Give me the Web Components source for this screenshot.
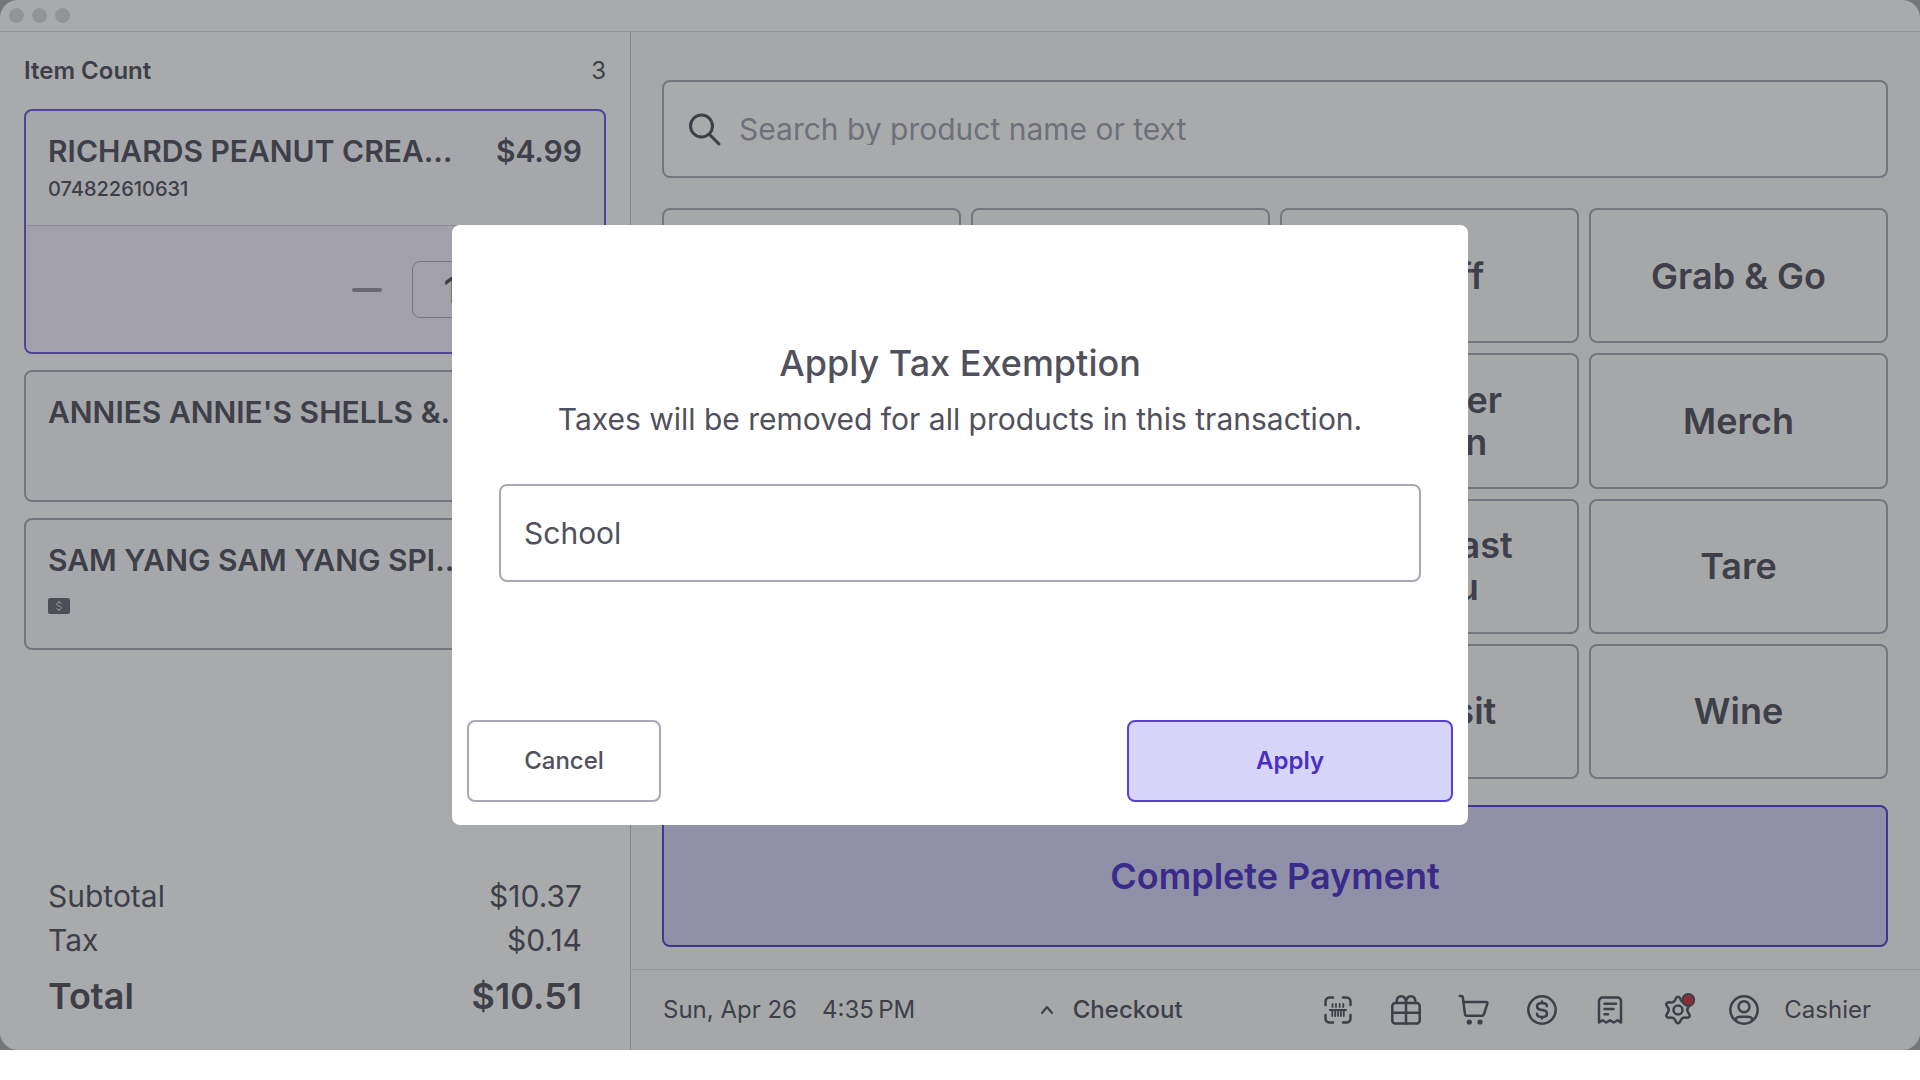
<!DOCTYPE html>
<html lang="en">
<head>
<meta charset="utf-8">
<title>Checkout</title>
<style>
    body {
        --ink: #50515c;
        --line: #a9a9b5;
        --hairline: #dcdce0;
        --accent: #5a3fd6;
        --accent-text: #4a2fc6;
        --accent-soft: #d8d5fb;
        margin: 0;
        min-height: 100vh;
        display: flex;
        background: #fff;
        color: var(--ink);
        font-family: Inter, "Liberation Sans", sans-serif;
        font-size: 24px;
        line-height: 32px;
    }
</style>
</head>
<body>
<pos-window>
    <pos-cart count="3">
        <cart-item name="RICHARDS PEANUT CREA&hellip;" price="$4.99" code="074822610631" quantity="1" selected></cart-item>
        <cart-item name="ANNIES ANNIE'S SHELLS &amp;&hellip;"></cart-item>
        <cart-item name="SAM YANG SAM YANG SPI&hellip;" cash></cart-item>
    </pos-cart>
    <pos-catalog>
        <quick-tile></quick-tile>
        <quick-tile></quick-tile>
        <quick-tile>$5 Off</quick-tile>
        <quick-tile>Grab &amp; Go</quick-tile>
        <quick-tile></quick-tile>
        <quick-tile></quick-tile>
        <quick-tile>Member Return</quick-tile>
        <quick-tile>Merch</quick-tile>
        <quick-tile></quick-tile>
        <quick-tile></quick-tile>
        <quick-tile>Breakfast Menu</quick-tile>
        <quick-tile>Tare</quick-tile>
        <quick-tile></quick-tile>
        <quick-tile></quick-tile>
        <quick-tile>Deposit</quick-tile>
        <quick-tile>Wine</quick-tile>
    </pos-catalog>
    <status-bar slot="status"></status-bar>
    <tax-dialog slot="dialog" value="School">
        <span slot="title">Apply Tax Exemption</span>
        <span slot="message">Taxes will be removed for all products in this transaction.</span>
    </tax-dialog>
</pos-window>

<script>
// Shared rules, each shadow root gets its own copy
const BASE = `
    * { box-sizing: border-box; }
    button, input { font: inherit; color: inherit; margin: 0; }
    button { background: none; border: 0; padding: 0; cursor: pointer; }
    svg { display: block; fill: none; stroke: currentColor; stroke-linecap: round; stroke-linejoin: round; overflow: visible; }
`;

class PosElement extends HTMLElement {
    constructor() {
        super();
        this.attachShadow({ mode: 'open' });
    }

    connectedCallback() {
        this.shadowRoot.innerHTML = `<style>${BASE}</style>${this.render()}`;
    }
}

// App window: title bar, cart on the left, catalog and status bar on the right
class PosWindow extends PosElement {
    render() {
        return `
            <style>
                :host {
                    position: relative;
                    flex: 1;
                    display: flex;
                    margin-bottom: 30px;
                    background: #aaabad;
                }
                .frame {
                    flex: 1;
                    display: flex;
                    flex-direction: column;
                    border-radius: 18px;
                    overflow: hidden;
                    background: #fff;
                }
                .titlebar {
                    display: flex;
                    align-items: center;
                    gap: 8px;
                    height: 32px;
                    padding: 0 9px;
                    border-bottom: 1px solid var(--hairline);
                }
                .titlebar i {
                    width: 15px;
                    height: 15px;
                    border-radius: 50%;
                    background: #dcdcdc;
                }
                .content {
                    flex: 1;
                    display: grid;
                    grid-template-columns: 631fr 1289fr;
                    grid-template-rows: 1fr auto;
                }
                ::slotted(pos-cart) { grid-row: 1 / 3; }
                ::slotted(pos-catalog), ::slotted(status-bar) { grid-column: 2; }
            </style>
            <div class="frame">
                <div class="titlebar"><i></i><i></i><i></i></div>
                <div class="content">
                    <slot></slot>
                    <slot name="status"></slot>
                </div>
            </div>
            <slot name="dialog"></slot>
        `;
    }
}

class PosCart extends PosElement {
    render() {
        return `
            <style>
                :host {
                    display: flex;
                    flex-direction: column;
                    padding: 23px 24px 30px;
                    border-right: 1px solid #c6c6cc;
                }
                .count {
                    display: flex;
                    justify-content: space-between;
                    margin-bottom: 22px;
                }
                .count b { font-weight: 600; }
                .items {
                    flex: 1;
                    display: flex;
                    flex-direction: column;
                    gap: 16px;
                }
                dl {
                    margin: 0;
                    padding: 0 24px;
                    font-size: 30px;
                    line-height: 44px;
                }
                dl div { display: flex; justify-content: space-between; }
                dd { margin: 0; }
                .total {
                    margin-top: 10px;
                    font-size: 36px;
                    font-weight: 600;
                    line-height: 48px;
                }
            </style>
            <div class="count"><b>Item Count</b><span>${this.getAttribute('count')}</span></div>
            <div class="items"><slot></slot></div>
            <dl>
                <div><dt>Subtotal</dt><dd>$10.37</dd></div>
                <div><dt>Tax</dt><dd>$0.14</dd></div>
                <div class="total"><dt>Total</dt><dd>$10.51</dd></div>
            </dl>
        `;
    }
}

class CartItem extends PosElement {
    render() {
        const quantity = this.getAttribute('quantity');
        const stepper = quantity ? `
            <div class="stepper">
                <button type="button" aria-label="Remove one">
                    <svg width="30" height="30" stroke-width="4"><path d="M2 15h26"/></svg>
                </button>
                <input type="text" aria-label="Quantity" value="${quantity}">
                <button type="button" aria-label="Add one">
                    <svg width="30" height="30" stroke-width="4"><path d="M2 15h26M15 2v26"/></svg>
                </button>
            </div>` : '';
        const cash = this.hasAttribute('cash') ? `
            <svg class="cash" width="22" height="16" viewBox="0 0 22 16">
                <rect width="22" height="16" rx="2" fill="#696a75" stroke="none"/>
                <path d="M13.2 5.6c-.3-.8-1.100-1.200-2.200-1.200-1.300 0-2.200.6-2.200 1.700 0 2.500 4.500 1.200 4.500 3.700 0 1.100-1 1.800-2.300 1.800-1.200 0-2.100-.5-2.400-1.400M11 3.300v1.100M11 11.600v1.100" stroke="#e4e4e8"/>
            </svg>` : '';
        return `
            <style>
                :host {
                    display: block;
                    border: 2px solid var(--line);
                    border-radius: 8px;
                    background: #fbfbfc;
                    overflow: hidden;
                }
                :host([selected]) { border-color: #6f58dc; }
                .info {
                    min-height: 128px;
                    padding: 20px 22px;
                }
                :host([selected]) .info {
                    min-height: 114px;
                    padding-bottom: 18px;
                }
                .line {
                    display: flex;
                    justify-content: space-between;
                    font-size: 30px;
                    font-weight: 600;
                    line-height: 40px;
                    white-space: nowrap;
                }
                .code {
                    font-size: 20px;
                    line-height: 36px;
                    font-weight: 500;
                }
                .cash { margin-top: 18px; }
                .stepper {
                    display: flex;
                    align-items: center;
                    justify-content: flex-end;
                    gap: 30px;
                    padding: 35px 54px 34px;
                    border-top: 1px solid #d2cfe4;
                    background: #f3effc;
                    color: #9594a2;
                }
                .stepper input {
                    width: 78px;
                    height: 57px;
                    border: 1px solid var(--line);
                    border-radius: 8px;
                    background: none;
                    color: var(--ink);
                    font-size: 36px;
                    font-weight: 500;
                    text-align: center;
                }
            </style>
            <div class="info">
                <div class="line"><span>${this.getAttribute('name')}</span><span>${this.getAttribute('price') || ''}</span></div>
                ${this.hasAttribute('code') ? `<div class="code">${this.getAttribute('code')}</div>` : ''}
                ${cash}
            </div>
            ${stepper}
        `;
    }
}

class PosCatalog extends PosElement {
    render() {
        return `
            <style>
                :host {
                    display: flex;
                    flex-direction: column;
                    padding: 48px 32px 22px 31px;
                    background: #fafafb;
                }
                .search {
                    display: flex;
                    align-items: center;
                    gap: 19px;
                    height: 98px;
                    padding: 0 24px;
                    border: 2px solid var(--line);
                    border-radius: 8px;
                    background: #fff;
                    font-size: 30px;
                }
                .search input {
                    flex: 1;
                    border: 0;
                    padding: 0;
                    background: none;
                    outline: 0;
                }
                .search input::placeholder { color: #a1a1ae; opacity: 1; }
                .tiles {
                    flex: 1;
                    display: grid;
                    grid-template-columns: repeat(4, 1fr);
                    grid-auto-rows: 1fr;
                    gap: 10px;
                    margin: 30px 0 26px;
                }
                .pay {
                    height: 142px;
                    border: 2px solid var(--accent);
                    border-radius: 8px;
                    background: var(--accent-soft);
                    color: var(--accent-text);
                    font-size: 36px;
                    font-weight: 600;
                }
            </style>
            <label class="search">
                <svg width="32" height="32" stroke-width="3"><circle cx="13.500" cy="13" r="11"/><path d="M21.500 21.500L31 31"/></svg>
                <input type="text" aria-label="Search products" placeholder="Search by product name or text">
            </label>
            <div class="tiles"><slot></slot></div>
            <button class="pay" type="button">Complete Payment</button>
        `;
    }
}

class QuickTile extends PosElement {
    render() {
        return `
            <style>
                :host { display: flex; }
                button {
                    flex: 1;
                    padding: 0 48px;
                    border: 2px solid var(--line);
                    border-radius: 8px;
                    font-size: 36px;
                    font-weight: 600;
                    line-height: 42px;
                }
            </style>
            <button type="button"><slot></slot></button>
        `;
    }
}

const ICONS = {
    'Scan': `<path d="M3.500 11V7.500a4 4 0 0 1 4-4H11M21 3.500h3.500a4 4 0 0 1 4 4V11M28.500 21v3.500a4 4 0 0 1-4 4H21M11 28.500H7.500a4 4 0 0 1-4-4V21"/>
        <path d="M7.800 16h16.400M10.500 10v3M14 10v3M17.700 10v3M21.300 10v3M10.300 17v5M13.200 17v5M16 17v5M18.900 17v5M21.800 17v5" stroke-width="1.800"/>`,
    'Gift cards': `<rect x="2.300" y="9" width="27.400" height="20.500" rx="3"/>
        <path d="M16 9v20.500M2.300 18.700h27.400M16 9c0-4-1.800-6.800-5-6.800-3 0-4.700 2.600-4.300 6.800M16 9c0-4 1.800-6.800 5-6.800 3 0 4.700 2.600 4.300 6.800"/>`,
    'Orders': `<path d="M1.700 2h1.600c.9 0 1.400.4 1.500 1.300L7 20.200c.1 1 .7 1.500 1.600 1.500h15.600c.9 0 1.500-.5 1.700-1.400L29.400 9.600c.2-1-.3-1.600-1.200-1.600H5.600"/>
        <circle cx="11.300" cy="28" r="2.600" fill="currentColor" stroke="none"/><circle cx="22" cy="28" r="2.600" fill="currentColor" stroke="none"/>`,
    'Cash drawer': `<circle cx="16" cy="16" r="13.700"/>
        <path d="M20.900 12.200c0-1.900-1.500-3-3.600-3h-2.600c-2 0-3.600 1.300-3.600 3.200s1.300 2.900 3.400 3.300l2.900.6c2.200.4 3.600 1.500 3.600 3.400s-1.600 3.200-3.700 3.200h-2.600c-2.200 0-3.700-1.200-3.700-3.100M16 7.500v1.700M16 22.900v1.700"/>`,
    'Receipts': `<path d="M5 28.500V7a3.500 3.500 0 0 1 3.500-3.500h15A3.500 3.500 0 0 1 27 7v21.500l-3.500-2.200-3.700 2.200-3.800-2.200-3.800 2.200-3.700-2.200z"/>
        <path d="M10.500 9.700h11.500M10.500 15h9M10.500 20.300h3.500"/>`,
    'Settings': `<g transform="translate(16 16)"><path d="M-2.200-11.500Q0-15 2.200-11.500Q3.750-6.500 8.860-7.660Q13-7.500 11.060-3.840Q7.500 0 11.060 3.840Q13 7.500 8.860 7.660Q3.750 6.500 2.200 11.500Q0 15-2.200 11.500Q-3.750 6.500-8.860 7.660Q-13 7.500-11.060 3.840Q-7.500 0-11.060-3.840Q-13-7.500-8.860-7.660Q-3.750-6.500-2.200-11.500z"/><circle r="4.500"/></g>
        <circle cx="26.300" cy="6" r="6" fill="#d03142" stroke-width="1.800"/>`
};

const ACCOUNT_ICON = `<circle cx="16" cy="16" r="13.700"/><circle cx="16" cy="12.700" r="5.500"/>
    <path d="M7.300 26c.6-2.600 2.200-3.300 4.700-3.300h8c2.500 0 4.100.7 4.700 3.300"/>`;

function icon(shape) {
    return `<svg width="32" height="32" viewBox="0 0 32 32" stroke-width="2.500">${shape}</svg>`;
}

class StatusBar extends PosElement {
    render() {
        const tools = Object.entries(ICONS).map(([label, shape]) => `
            <button type="button" aria-label="${label}">${icon(shape)}</button>
        `).join('');
        return `
            <style>
                :host {
                    display: flex;
                    align-items: center;
                    justify-content: space-between;
                    height: 80px;
                    padding: 0 49px 0 32px;
                    border-top: 1px solid var(--hairline);
                    background: #fafafb;
                    white-space: nowrap;
                }
                .when { display: flex; gap: 25px; }
                .mode {
                    display: flex;
                    align-items: center;
                    gap: 20px;
                    padding-right: 14px;
                    font-weight: 500;
                }
                .right {
                    display: flex;
                    gap: 34px;
                }
                .tools {
                    display: flex;
                    gap: 36px;
                }
                .account {
                    display: flex;
                    align-items: center;
                    gap: 24px;
                }
            </style>
            <div class="when"><span>Sun, Apr 26</span><span>4:35&#8239;PM</span></div>
            <button class="mode" type="button">
                <svg width="12" height="8" stroke-width="2"><path d="M1 7l5-6 5 6"/></svg>
                Checkout
            </button>
            <div class="right">
                <div class="tools">${tools}</div>
                <button class="account" type="button">${icon(ACCOUNT_ICON)}Cashier</button>
            </div>
        `;
    }
}

class TaxDialog extends PosElement {
    render() {
        return `
            <style>
                :host {
                    position: absolute;
                    inset: 0;
                    display: flex;
                    align-items: center;
                    justify-content: center;
                    background: rgba(33, 36, 42, .39);
                }
                section {
                    display: flex;
                    flex-direction: column;
                    width: 1016px;
                    min-height: 600px;
                    padding: 116px 15px 23px;
                    border-radius: 8px;
                    background: #fff;
                }
                h2, p { margin: 0; text-align: center; }
                h2 {
                    font-size: 36px;
                    font-weight: 500;
                    line-height: 44px;
                }
                p {
                    margin: 14px 0 45px;
                    font-size: 30px;
                    line-height: 40px;
                }
                input {
                    height: 98px;
                    margin: 0 32px;
                    padding: 0 23px;
                    border: 2px solid var(--line);
                    border-radius: 8px;
                    font-size: 30px;
                }
                footer {
                    display: flex;
                    justify-content: space-between;
                    margin-top: auto;
                }
                footer button {
                    width: 194px;
                    height: 82px;
                    border: 2px solid var(--line);
                    border-radius: 8px;
                    font-weight: 500;
                }
                footer .apply {
                    width: 326px;
                    border-color: var(--accent);
                    background: var(--accent-soft);
                    color: var(--accent-text);
                    font-weight: 600;
                }
            </style>
            <section role="dialog" aria-labelledby="title">
                <h2 id="title"><slot name="title"></slot></h2>
                <p><slot name="message"></slot></p>
                <input type="text" aria-label="Exemption reason" value="${this.getAttribute('value')}">
                <footer>
                    <button type="button">Cancel</button>
                    <button class="apply" type="button">Apply</button>
                </footer>
            </section>
        `;
    }
}

customElements.define('pos-window', PosWindow);
customElements.define('pos-cart', PosCart);
customElements.define('cart-item', CartItem);
customElements.define('pos-catalog', PosCatalog);
customElements.define('quick-tile', QuickTile);
customElements.define('status-bar', StatusBar);
customElements.define('tax-dialog', TaxDialog);
</script>
</body>
</html>
